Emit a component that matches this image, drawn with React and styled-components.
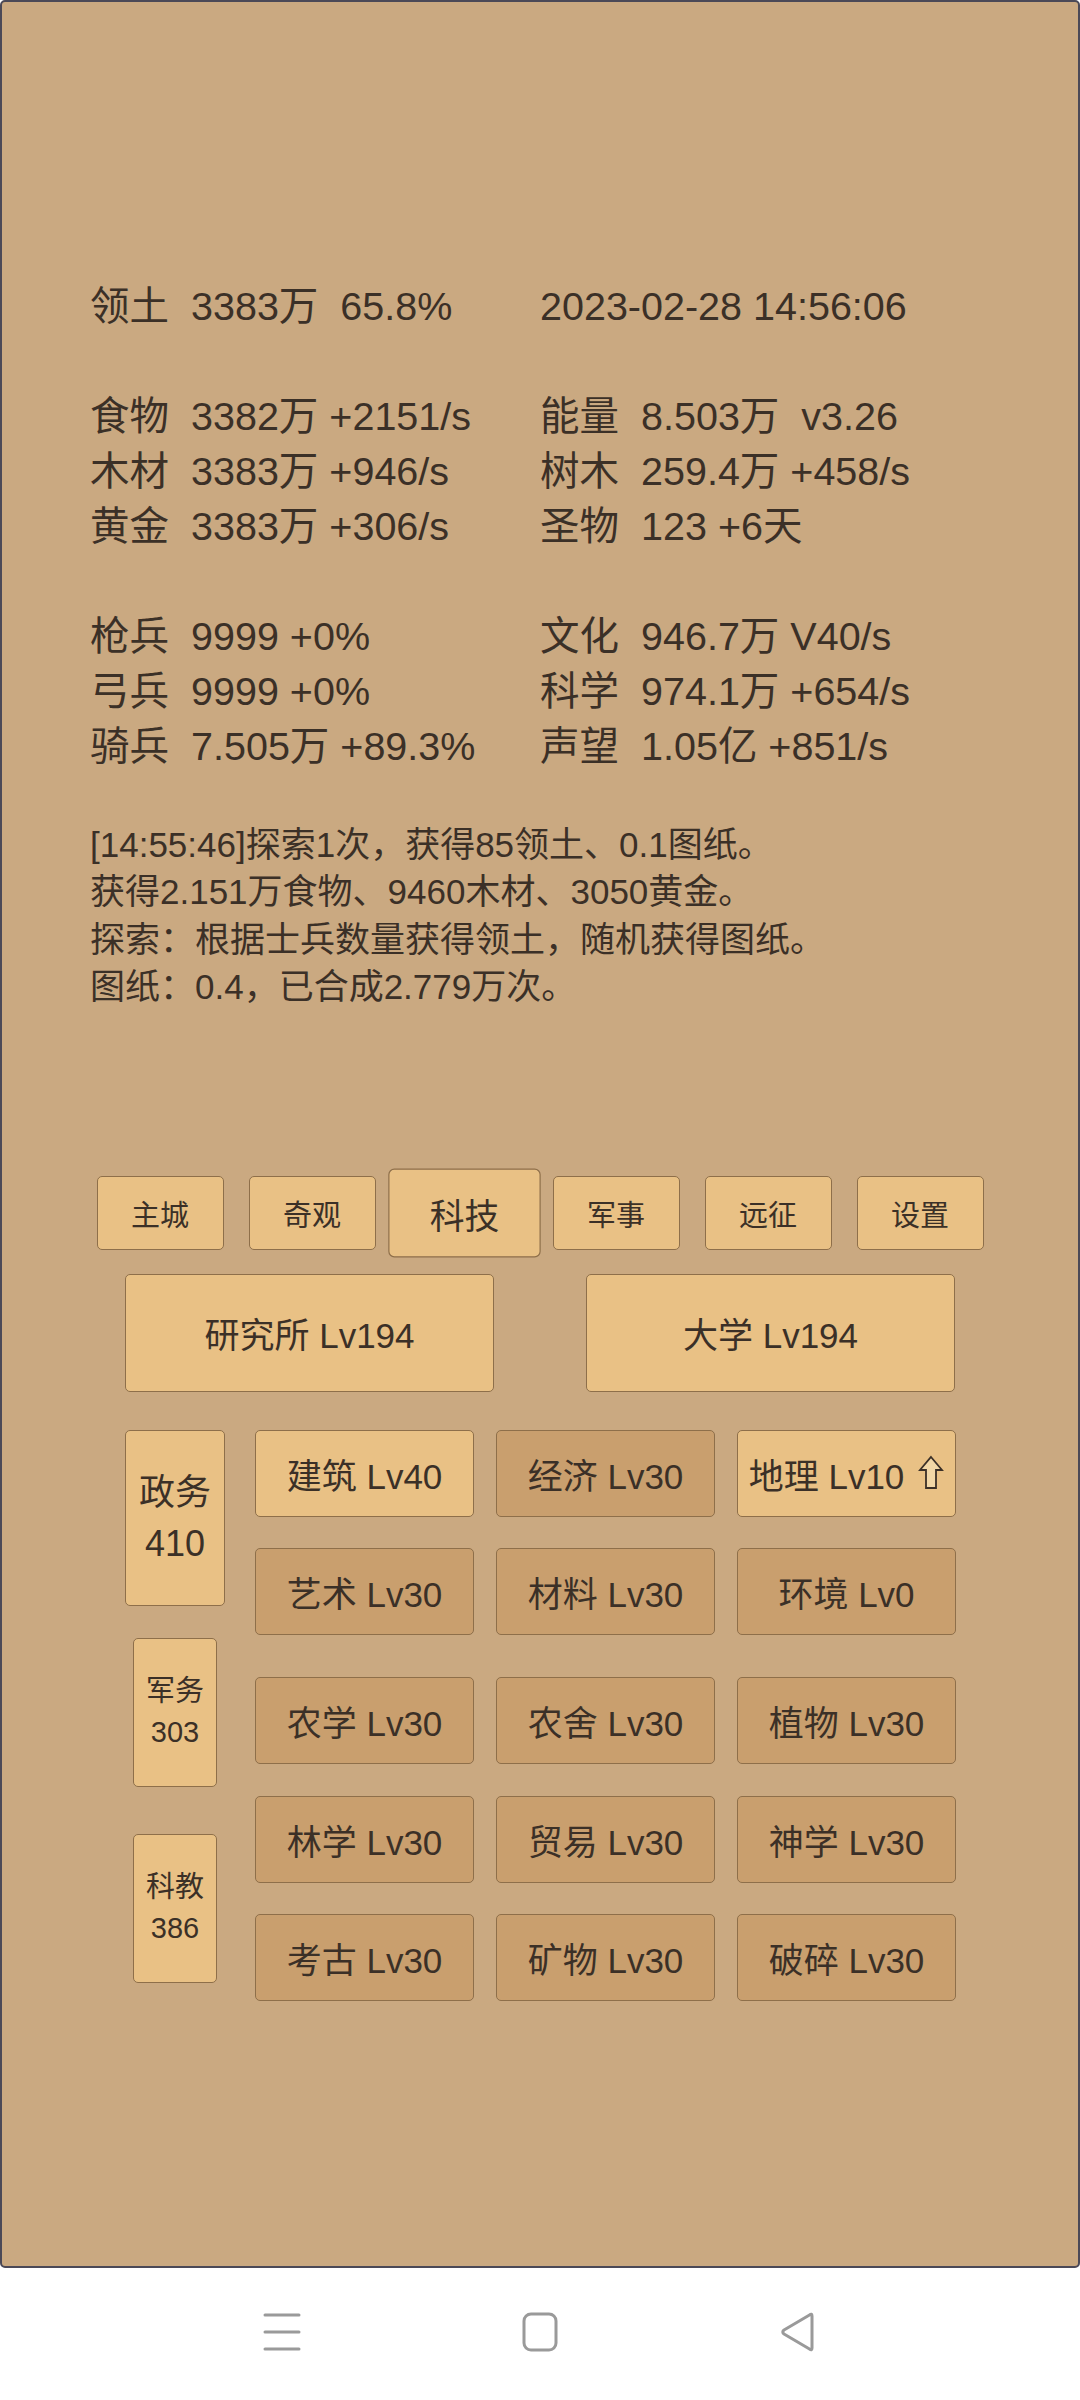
import React from "react";
import styled, { createGlobalStyle, css } from "styled-components";

const GlobalStyle = createGlobalStyle`
  html, body {
    margin: 0;
    padding: 0;
    background: #ffffff;
  }
  body {
    font-family: "Liberation Sans", "Noto Sans CJK SC", sans-serif;
    color: #3b3027;
  }
`;

const stats = [
  [["领土", "3383万  65.8%"], ["", "2023-02-28 14:56:06"]],
  null,
  [["食物", "3382万 +2151/s"], ["能量", "8.503万  v3.26"]],
  [["木材", "3383万 +946/s"], ["树木", "259.4万 +458/s"]],
  [["黄金", "3383万 +306/s"], ["圣物", "123 +6天"]],
  null,
  [["枪兵", "9999 +0%"], ["文化", "946.7万 V40/s"]],
  [["弓兵", "9999 +0%"], ["科学", "974.1万 +654/s"]],
  [["骑兵", "7.505万 +89.3%"], ["声望", "1.05亿 +851/s"]],
];

const logs = [
  "[14:55:46]探索1次，获得85领土、0.1图纸。",
  "获得2.151万食物、9460木材、3050黄金。",
  "探索：根据士兵数量获得领土，随机获得图纸。",
  "图纸：0.4，已合成2.779万次。",
];

const tabs = ["主城", "奇观", "科技", "军事", "远征", "设置"];

const sides = [
  { name: "政务", value: "410", small: false, gap: 0 },
  { name: "军务", value: "303", small: true, gap: 32 },
  { name: "科教", value: "386", small: true, gap: 47 },
];

const techRows = [
  [
    { name: "建筑 Lv40", light: true },
    { name: "经济 Lv30" },
    { name: "地理 Lv10", light: true, up: true },
  ],
  [{ name: "艺术 Lv30" }, { name: "材料 Lv30" }, { name: "环境 Lv0" }],
  [{ name: "农学 Lv30" }, { name: "农舍 Lv30" }, { name: "植物 Lv30" }],
  [{ name: "林学 Lv30" }, { name: "贸易 Lv30" }, { name: "神学 Lv30" }],
  [{ name: "考古 Lv30" }, { name: "矿物 Lv30" }, { name: "破碎 Lv30" }],
];

const UpIcon = () => (
  <UpArrow width="26" height="36" viewBox="0 0 26 36">
    <path
      d="M13 2 L24 15 L18 15 L18 33 L8 33 L8 15 L2 15 Z"
      fill="#f2d7a6"
      stroke="#3b3027"
      strokeWidth="1.8"
      strokeLinejoin="miter"
    />
  </UpArrow>
);

const App = () => {
  return (
    <>
      <GlobalStyle />
      <Screen>
        <Panel>
          <Stats>
            {stats.map((row, i) =>
              row ? (
                <StatRow key={i}>
                  {row.map(([label, value], j) => (
                    <Stat key={j}>
                      {label && <Label>{label}</Label>}
                      <span>{value}</span>
                    </Stat>
                  ))}
                </StatRow>
              ) : (
                <BlankRow key={i} />
              )
            )}
          </Stats>

          <Log>
            {logs.map((line) => (
              <div key={line}>{line}</div>
            ))}
          </Log>

          <Tabs>
            {tabs.map((t) => (
              <Tab key={t} $active={t === "科技"}>
                {t}
              </Tab>
            ))}
          </Tabs>

          <Buildings>
            <BuildingButton>研究所 Lv194</BuildingButton>
            <BuildingButton>大学 Lv194</BuildingButton>
          </Buildings>

          <TechArea>
            <SideColumn>
              {sides.map((s) => (
                <SideButton key={s.name} $small={s.small} $gap={s.gap}>
                  <span>{s.name}</span>
                  <span>{s.value}</span>
                </SideButton>
              ))}
            </SideColumn>
            <TechGroups>
              <TechGrid>
                {techRows.slice(0, 2).flat().map((t) => (
                  <TechButton key={t.name} $light={t.light}>
                    {t.name}
                    {t.up && <UpIcon />}
                  </TechButton>
                ))}
              </TechGrid>
              <TechGrid>
                {techRows.slice(2).flat().map((t) => (
                  <TechButton key={t.name} $light={t.light}>
                    {t.name}
                  </TechButton>
                ))}
              </TechGrid>
            </TechGroups>
          </TechArea>
        </Panel>

        <NavBar>
          <NavSlot>
            <svg width="38" height="40" viewBox="0 0 38 40">
              <g stroke="#9a9a9a" strokeWidth="3" strokeLinecap="round">
                <line x1="2" y1="3" x2="36" y2="3" />
                <line x1="2" y1="20" x2="36" y2="20" />
                <line x1="2" y1="37" x2="36" y2="37" />
              </g>
            </svg>
          </NavSlot>
          <NavSlot>
            <svg width="38" height="40" viewBox="0 0 38 40">
              <rect x="3" y="2" width="32" height="36" rx="7" fill="none" stroke="#9a9a9a" strokeWidth="3" />
            </svg>
          </NavSlot>
          <NavSlot>
            <svg width="38" height="40" viewBox="0 0 38 40">
              <path
                d="M33 4 L33 36 Q33 39 30.5 37 L5 22 Q2.5 20 5 18 L30.5 3 Q33 1 33 4 Z"
                fill="none"
                stroke="#9a9a9a"
                strokeWidth="3"
                strokeLinejoin="round"
              />
            </svg>
          </NavSlot>
        </NavBar>
      </Screen>
    </>
  );
};

const Screen = styled.div`
  width: 1080px;
  height: 2400px;
  display: flex;
  flex-direction: column;
  background: #ffffff;
`;

const Panel = styled.div`
  box-sizing: border-box;
  height: 2268px;
  background: #caa981;
  border: 2px solid #4b4957;
  border-radius: 5px;
  padding-top: 277px;
  display: flex;
  flex-direction: column;
`;

const Stats = styled.div`
  padding-left: 88px;
  font-size: 39.5px;
  line-height: 55px;
`;

const StatRow = styled.div`
  display: grid;
  grid-template-columns: 450px 1fr;
  height: 55px;
`;

const BlankRow = styled.div`
  height: 55px;
`;

const Stat = styled.div`
  display: flex;
  white-space: pre;
`;

const Label = styled.span`
  margin-right: 22px;
`;

const Log = styled.div`
  margin-top: 47px;
  padding-left: 88px;
  font-size: 35px;
  line-height: 47.4px;
  white-space: nowrap;
`;

const buttonBase = css`
  box-sizing: border-box;
  display: flex;
  align-items: center;
  justify-content: center;
  border: 1.5px solid #8e6f4a;
  border-radius: 5px;
  color: #3b3027;
  white-space: nowrap;
`;

const Tabs = styled.div`
  margin-top: 165px;
  display: flex;
  justify-content: center;
  gap: 25px;
`;

const Tab = styled.div`
  ${buttonBase};
  width: 127px;
  height: 74px;
  background: #e9c185;
  font-size: 29px;
  ${({ $active }) =>
    $active &&
    css`
      transform: scale(1.2);
    `}
`;

const Buildings = styled.div`
  margin-top: 24px;
  display: flex;
  justify-content: center;
  gap: 92px;
`;

const BuildingButton = styled.div`
  ${buttonBase};
  width: 369px;
  height: 118px;
  background: #e9c185;
  font-size: 35px;
`;

const TechArea = styled.div`
  margin: 38px auto 0;
  width: 830px;
  display: flex;
  gap: 30px;
`;

const SideColumn = styled.div`
  width: 100px;
  display: flex;
  flex-direction: column;
  align-items: center;
`;

const SideButton = styled.div`
  ${buttonBase};
  flex-direction: column;
  background: #e9c185;
  margin-top: ${({ $gap }) => $gap}px;
  width: ${({ $small }) => ($small ? 84 : 100)}px;
  height: ${({ $small }) => ($small ? 149 : 176)}px;
  font-size: ${({ $small }) => ($small ? 29 : 36)}px;
  line-height: ${({ $small }) => ($small ? 41 : 51)}px;
`;

const TechGroups = styled.div`
  display: flex;
  flex-direction: column;
  gap: 42px;
`;

const TechGrid = styled.div`
  display: grid;
  grid-template-columns: repeat(3, 219px);
  grid-auto-rows: 87px;
  column-gap: 22px;
  row-gap: 31.5px;
`;

const TechButton = styled.div`
  ${buttonBase};
  background: ${({ $light }) => ($light ? "#e9c185" : "#c99f6e")};
  font-size: 35px;
`;

const UpArrow = styled.svg`
  margin-left: 14px;
  flex-shrink: 0;
`;

const NavBar = styled.div`
  flex: 1;
  display: flex;
  justify-content: center;
  align-items: center;
  padding-bottom: 4px;
`;

const NavSlot = styled.div`
  width: 258px;
  display: flex;
  justify-content: center;
`;

export default App;
